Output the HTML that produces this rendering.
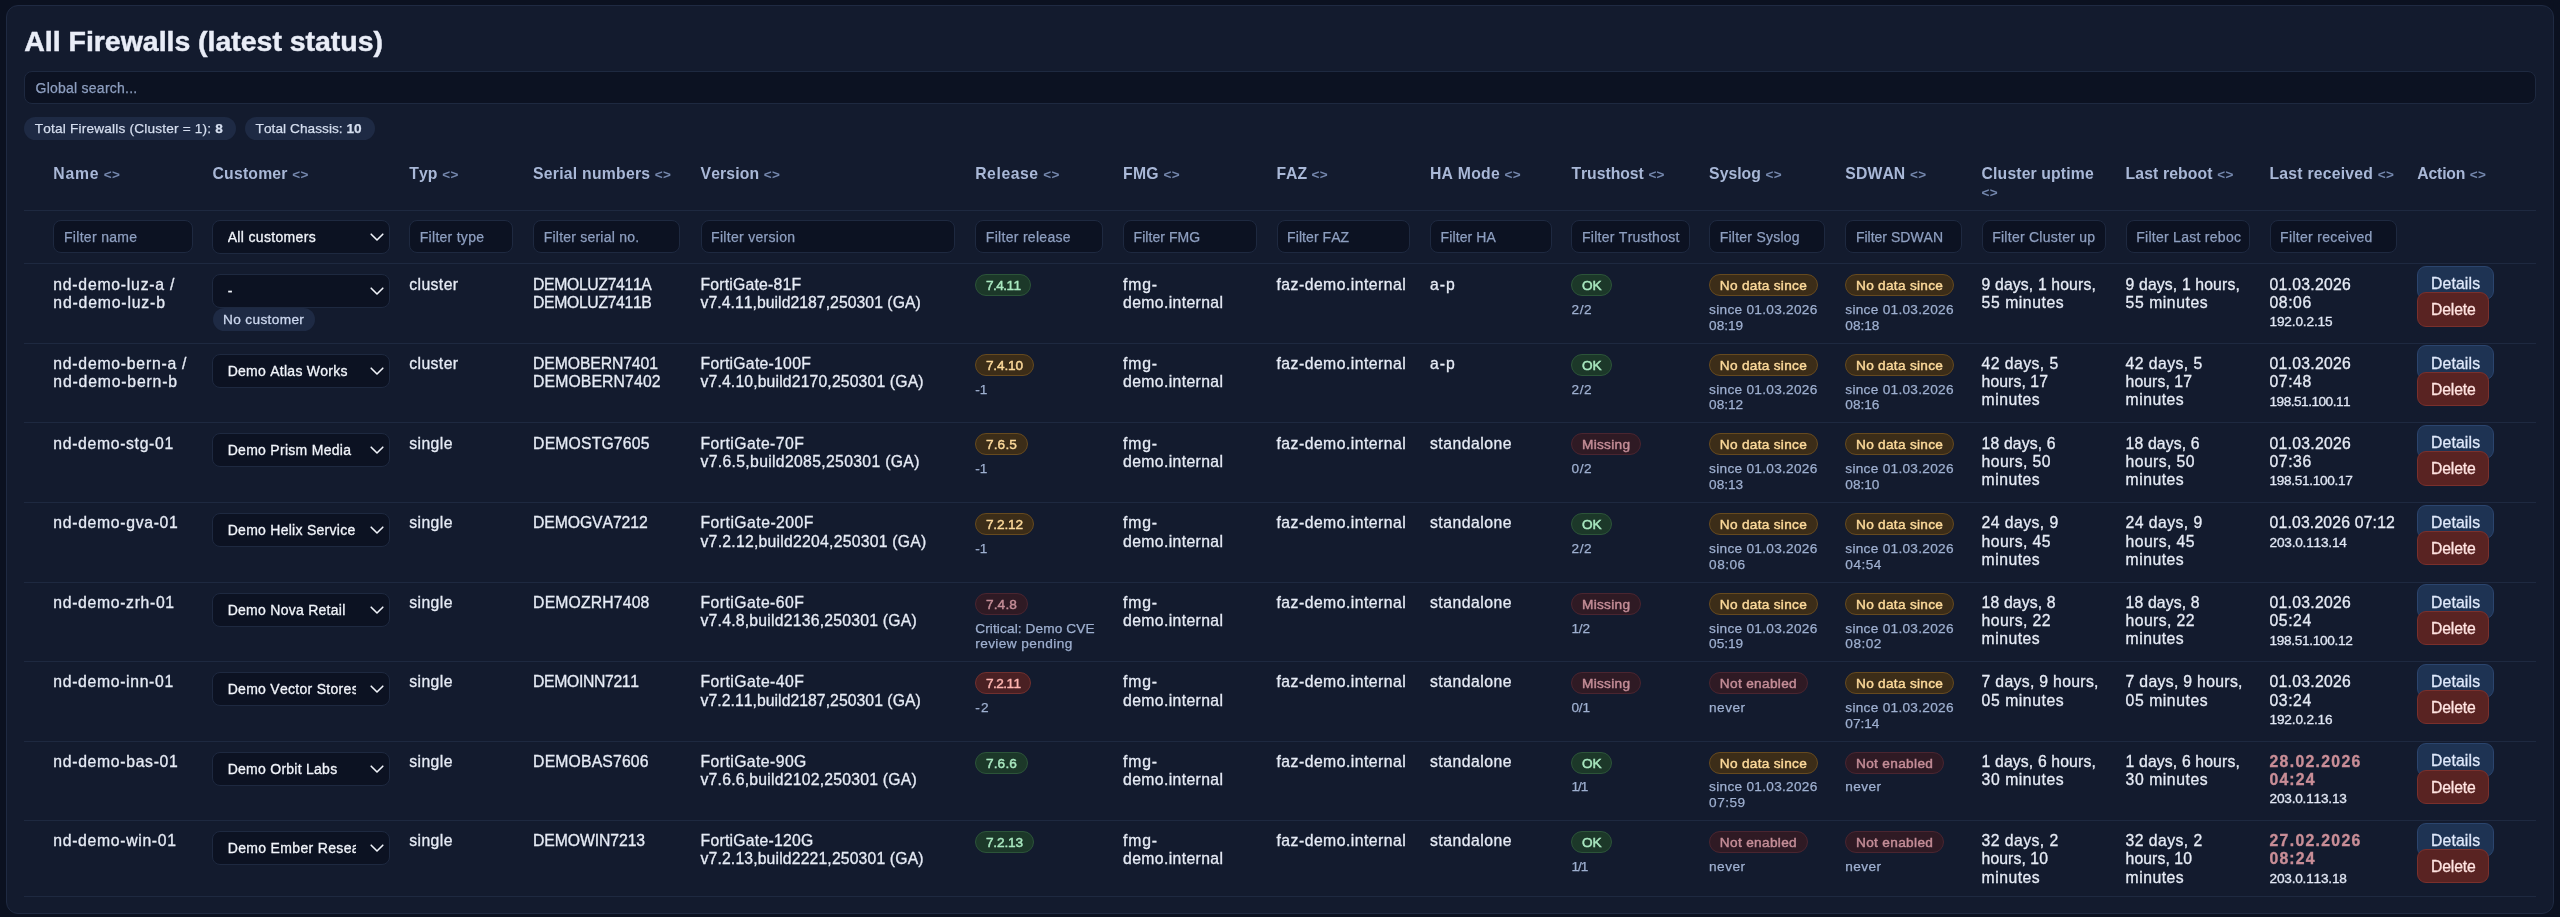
<!DOCTYPE html><html><head><meta charset="utf-8"><title>All Firewalls</title><style>
*{box-sizing:border-box}
html,body{margin:0;padding:0}
body{width:2560px;height:917px;overflow:hidden;background:#0b1120;font-family:"Liberation Sans",sans-serif;color:#e6ebf5;font-kerning:none;position:relative}
.abs,.card,.ln,.t,.s,.b,.inp,.sel,.pill,.btn,.h{position:absolute;white-space:nowrap}
.card{left:6px;top:5px;width:2548px;height:909px;border:1px solid #1f2a42;border-radius:12px;background:#131b2e}
.ln{left:24px;width:2512px;height:1px;background:#1e2940}
.t{line-height:18.2px;color:#e6ebf5;-webkit-text-stroke-width:0.3px}
.s{line-height:15.7px;color:#9fb0d0;-webkit-text-stroke-width:0.25px}
.h{line-height:18.2px;color:#a9b8d7}
.h i{font-style:normal;color:#7588ae}
.b{-webkit-text-stroke:0.45px;height:22px;border-radius:11px;border:1px solid;line-height:20px;padding:0 9.7px}
.g{background:#1c3829;border-color:#2c5439;color:#a9e8c0}
.a{background:#3c2d18;border-color:#664a1f;color:#fcd99a}
.r{background:#4a2023;border-color:#70302f;color:#fdb5b0}
.m{background:#2f1a24;border-color:#4a2530;color:#c48d97}
.inp{-webkit-text-stroke:0.25px;height:33px;border-radius:8px;border:1px solid #1e2940;background:#0c1222;color:#8e9fc0;line-height:31px;padding-left:9.6px;overflow:hidden}
.sel{-webkit-text-stroke:0.3px;height:34px;border-radius:8px;border:1px solid #1e2940;background:#0c1222;color:#f1f4fa;line-height:31.6px;padding-left:14.5px;overflow:hidden}
.sel svg{position:absolute;right:5px;top:10px}
.sel .tx{display:block;width:128px;overflow:hidden}
.pill{-webkit-text-stroke:0.25px;border-radius:12px;background:#1e2a44;color:#d5deef;padding:0 10.5px}
.btn{-webkit-text-stroke:0.3px;height:34.4px;border-radius:9px;border:1px solid;line-height:18px;padding:8.4px 12.7px 0}
.bd{background:#1e3353;border-color:#2b456e;color:#dfe9fb}
.br{background:#592322;border-color:#7a302c;color:#ffe3e0}
</style></head><body>
<div class="card"></div><div id="w" style="position:absolute;left:0;top:0;width:2560px;height:917px;will-change:transform">
<div class="t" style="left:24.3px;top:23.90px;line-height:34px;color:#e9edf7;-webkit-text-stroke:0.45px;"><span style="font-size:28.5px;letter-spacing:-0.029px;font-weight:700;">All Firewalls (latest status)</span></div>
<div class="inp" style="left:24px;top:71px;width:2512px;height:33px;line-height:31.5px;padding-left:10.5px"><span style="font-size:14.0px;letter-spacing:0.247px;">Global search...</span></div>
<div class="pill" style="left:24.3px;top:116.5px;width:211.5px;height:23.2px;line-height:22px"><span style="font-size:13.65px;letter-spacing:0.183px;">Total Firewalls (Cluster = 1): </span><span style="font-size:13.65px;letter-spacing:1.185px;font-weight:700;">8</span></div>
<div class="pill" style="left:245.1px;top:116.5px;width:130.2px;height:23.2px;line-height:22px"><span style="font-size:13.65px;letter-spacing:0.049px;">Total Chassis: </span><span style="font-size:13.65px;letter-spacing:-0.118px;font-weight:700;">10</span></div>
<div class="h" style="left:53.3px;top:165.00px"><span style="font-size:15.75px;letter-spacing:0.741px;font-weight:700;">Name</span><i style="margin-left:4.6px;font-size:13.5px;font-weight:700;letter-spacing:0.35px">&lt;&gt;</i></div>
<div class="h" style="left:212.5px;top:165.00px"><span style="font-size:15.75px;letter-spacing:0.208px;font-weight:700;">Customer</span><i style="margin-left:4.6px;font-size:13.5px;font-weight:700;letter-spacing:0.35px">&lt;&gt;</i></div>
<div class="h" style="left:409.2px;top:165.00px"><span style="font-size:15.75px;letter-spacing:0.143px;font-weight:700;">Typ</span><i style="margin-left:4.6px;font-size:13.5px;font-weight:700;letter-spacing:0.35px">&lt;&gt;</i></div>
<div class="h" style="left:533.1px;top:165.00px"><span style="font-size:15.75px;letter-spacing:0.240px;font-weight:700;">Serial numbers</span><i style="margin-left:4.6px;font-size:13.5px;font-weight:700;letter-spacing:0.35px">&lt;&gt;</i></div>
<div class="h" style="left:700.5px;top:165.00px"><span style="font-size:15.75px;letter-spacing:0.127px;font-weight:700;">Version</span><i style="margin-left:4.6px;font-size:13.5px;font-weight:700;letter-spacing:0.35px">&lt;&gt;</i></div>
<div class="h" style="left:975.2px;top:165.00px"><span style="font-size:15.75px;letter-spacing:0.561px;font-weight:700;">Release</span><i style="margin-left:4.6px;font-size:13.5px;font-weight:700;letter-spacing:0.35px">&lt;&gt;</i></div>
<div class="h" style="left:1123px;top:165.00px"><span style="font-size:15.75px;letter-spacing:0.287px;font-weight:700;">FMG</span><i style="margin-left:4.6px;font-size:13.5px;font-weight:700;letter-spacing:0.35px">&lt;&gt;</i></div>
<div class="h" style="left:1276.5px;top:165.00px"><span style="font-size:15.75px;letter-spacing:-0.046px;font-weight:700;">FAZ</span><i style="margin-left:4.6px;font-size:13.5px;font-weight:700;letter-spacing:0.35px">&lt;&gt;</i></div>
<div class="h" style="left:1430px;top:165.00px"><span style="font-size:15.75px;letter-spacing:0.243px;font-weight:700;">HA Mode</span><i style="margin-left:4.6px;font-size:13.5px;font-weight:700;letter-spacing:0.35px">&lt;&gt;</i></div>
<div class="h" style="left:1571.4px;top:165.00px"><span style="font-size:15.75px;letter-spacing:-0.024px;font-weight:700;">Trusthost</span><i style="margin-left:4.6px;font-size:13.5px;font-weight:700;letter-spacing:0.35px">&lt;&gt;</i></div>
<div class="h" style="left:1709.1px;top:165.00px"><span style="font-size:15.75px;letter-spacing:0.029px;font-weight:700;">Syslog</span><i style="margin-left:4.6px;font-size:13.5px;font-weight:700;letter-spacing:0.35px">&lt;&gt;</i></div>
<div class="h" style="left:1845.3px;top:165.00px"><span style="font-size:15.75px;letter-spacing:0.114px;font-weight:700;">SDWAN</span><i style="margin-left:4.6px;font-size:13.5px;font-weight:700;letter-spacing:0.35px">&lt;&gt;</i></div>
<div class="h" style="left:1981.6px;top:165.00px"><span style="font-size:15.75px;letter-spacing:0.137px;font-weight:700;">Cluster uptime</span><br><i style="margin-left:0px;font-size:13.5px;font-weight:700;letter-spacing:0.35px">&lt;&gt;</i></div>
<div class="h" style="left:2125.6px;top:165.00px"><span style="font-size:15.75px;letter-spacing:0.117px;font-weight:700;">Last reboot</span><i style="margin-left:4.6px;font-size:13.5px;font-weight:700;letter-spacing:0.35px">&lt;&gt;</i></div>
<div class="h" style="left:2269.5px;top:165.00px"><span style="font-size:15.75px;letter-spacing:0.228px;font-weight:700;">Last received</span><i style="margin-left:4.6px;font-size:13.5px;font-weight:700;letter-spacing:0.35px">&lt;&gt;</i></div>
<div class="h" style="left:2417.3px;top:165.00px"><span style="font-size:15.75px;letter-spacing:-0.182px;font-weight:700;">Action</span><i style="margin-left:4.6px;font-size:13.5px;font-weight:700;letter-spacing:0.35px">&lt;&gt;</i></div>
<div class="ln" style="top:209.5px"></div>
<div class="inp" style="left:53.3px;top:220px;width:139.3px"><span style="font-size:14.0px;letter-spacing:0.323px;">Filter name</span></div>
<div class="inp" style="left:409.2px;top:220px;width:103.8px"><span style="font-size:14.0px;letter-spacing:0.274px;">Filter type</span></div>
<div class="inp" style="left:533.1px;top:220px;width:147.4px"><span style="font-size:14.0px;letter-spacing:0.222px;">Filter serial no.</span></div>
<div class="inp" style="left:700.5px;top:220px;width:254.8px"><span style="font-size:14.0px;letter-spacing:0.299px;">Filter version</span></div>
<div class="inp" style="left:975.2px;top:220px;width:127.5px"><span style="font-size:14.0px;letter-spacing:0.303px;">Filter release</span></div>
<div class="inp" style="left:1123px;top:220px;width:133.5px"><span style="font-size:14.0px;letter-spacing:0.058px;">Filter FMG</span></div>
<div class="inp" style="left:1276.5px;top:220px;width:133.5px"><span style="font-size:14.0px;letter-spacing:0.070px;">Filter FAZ</span></div>
<div class="inp" style="left:1430px;top:220px;width:121.7px"><span style="font-size:14.0px;letter-spacing:0.096px;">Filter HA</span></div>
<div class="inp" style="left:1571.4px;top:220px;width:118.2px"><span style="font-size:14.0px;letter-spacing:0.267px;">Filter Trusthost</span></div>
<div class="inp" style="left:1709.1px;top:220px;width:116.3px"><span style="font-size:14.0px;letter-spacing:0.244px;">Filter Syslog</span></div>
<div class="inp" style="left:1845.3px;top:220px;width:116.4px"><span style="font-size:14.0px;letter-spacing:0.006px;">Filter SDWAN</span></div>
<div class="inp" style="left:1981.6px;top:220px;width:124.1px"><span style="font-size:14.0px;letter-spacing:0.257px;">Filter Cluster up</span></div>
<div class="inp" style="left:2125.6px;top:220px;width:124.1px"><span style="font-size:14.0px;letter-spacing:0.274px;">Filter Last reboc</span></div>
<div class="inp" style="left:2269.5px;top:220px;width:127.9px"><span style="font-size:14.0px;letter-spacing:0.312px;">Filter received</span></div>
<div class="sel" style="left:212.2px;top:220.2px;width:177.6px"><span class="tx"><span style="font-size:14.0px;letter-spacing:0.336px;">All customers</span></span><svg width="14" height="12" viewBox="0 0 14 12"><path d="M1.2 3.2 L7 9 L12.8 3.2" fill="none" stroke="#f1f4fa" stroke-width="1.6" stroke-linecap="round" stroke-linejoin="round"/></svg></div>
<div class="ln" style="top:263px"></div>
<div class="ln" style="top:343px"></div>
<div class="ln" style="top:422px"></div>
<div class="ln" style="top:502px"></div>
<div class="ln" style="top:582px"></div>
<div class="ln" style="top:661px"></div>
<div class="ln" style="top:741px"></div>
<div class="ln" style="top:820px"></div>
<div class="ln" style="top:896px"></div>
<div class="t" style="left:53.3px;top:275.60px;line-height:18.2px;"><span style="font-size:15.75px;letter-spacing:0.769px;">nd-demo-luz-a /</span></div>
<div class="t" style="left:53.3px;top:293.75px;line-height:18.2px;"><span style="font-size:15.75px;letter-spacing:0.839px;">nd-demo-luz-b</span></div>
<div class="sel" style="left:212.2px;top:274.3px;width:177.6px"><span class="tx"><span style="font-size:14.0px;letter-spacing:1.620px;">-</span></span><svg width="14" height="12" viewBox="0 0 14 12"><path d="M1.2 3.2 L7 9 L12.8 3.2" fill="none" stroke="#f1f4fa" stroke-width="1.6" stroke-linecap="round" stroke-linejoin="round"/></svg></div>
<div class="pill" style="left:212.5px;top:308.1px;height:23px;line-height:22.6px;width:102.5px;color:#ccd7ee;-webkit-text-stroke:0.3px"><span style="font-size:13.65px;letter-spacing:0.357px;">No customer</span></div>
<div class="t" style="left:409.2px;top:275.60px;line-height:18.2px;"><span style="font-size:15.75px;letter-spacing:0.419px;">cluster</span></div>
<div class="t" style="left:533.1px;top:275.60px;line-height:18.2px;"><span style="font-size:15.75px;letter-spacing:-0.346px;">DEMOLUZ7411A</span></div>
<div class="t" style="left:533.1px;top:293.75px;line-height:18.2px;"><span style="font-size:15.75px;letter-spacing:-0.346px;">DEMOLUZ7411B</span></div>
<div class="t" style="left:700.5px;top:275.60px;line-height:18.2px;"><span style="font-size:15.75px;letter-spacing:0.217px;">FortiGate-81F</span></div>
<div class="t" style="left:700.5px;top:293.75px;line-height:18.2px;"><span style="font-size:15.75px;letter-spacing:0.048px;">v7.4.11,build2187,250301 (GA)</span></div>
<div class="b g" style="left:975.2px;top:274.3px"><span style="font-size:13.65px;letter-spacing:-0.547px;">7.4.11</span></div>
<div class="t" style="left:1123px;top:275.60px;line-height:18.2px;"><span style="font-size:15.75px;letter-spacing:0.871px;">fmg-</span></div>
<div class="t" style="left:1123px;top:293.75px;line-height:18.2px;"><span style="font-size:15.75px;letter-spacing:0.376px;">demo.internal</span></div>
<div class="t" style="left:1276.5px;top:275.60px;line-height:18.2px;"><span style="font-size:15.75px;letter-spacing:0.473px;">faz-demo.internal</span></div>
<div class="t" style="left:1430px;top:275.60px;line-height:18.2px;"><span style="font-size:15.75px;letter-spacing:0.978px;">a-p</span></div>
<div class="b g" style="left:1571.4px;top:274.3px"><span style="font-size:13.65px;letter-spacing:-0.239px;">OK</span></div>
<div class="s" style="left:1571.4px;top:301.20px;line-height:15.7px;"><span style="font-size:13.65px;letter-spacing:0.678px;">2/2</span></div>
<div class="b a" style="left:1709.1px;top:274.3px"><span style="font-size:13.65px;letter-spacing:0.295px;">No data since</span></div>
<div class="s" style="left:1709.1px;top:301.20px;line-height:15.7px;"><span style="font-size:13.65px;letter-spacing:0.287px;">since 01.03.2026</span></div>
<div class="s" style="left:1709.1px;top:316.90px;line-height:15.7px;"><span style="font-size:13.65px;letter-spacing:-0.005px;">08:19</span></div>
<div class="b a" style="left:1845.3px;top:274.3px"><span style="font-size:13.65px;letter-spacing:0.295px;">No data since</span></div>
<div class="s" style="left:1845.3px;top:301.20px;line-height:15.7px;"><span style="font-size:13.65px;letter-spacing:0.287px;">since 01.03.2026</span></div>
<div class="s" style="left:1845.3px;top:316.90px;line-height:15.7px;"><span style="font-size:13.65px;letter-spacing:-0.005px;">08:18</span></div>
<div class="t" style="left:1981.6px;top:275.60px;line-height:18.2px;"><span style="font-size:15.75px;letter-spacing:0.142px;">9 days, 1 hours,</span></div>
<div class="t" style="left:1981.6px;top:293.75px;line-height:18.2px;"><span style="font-size:15.75px;letter-spacing:0.550px;">55 minutes</span></div>
<div class="t" style="left:2125.6px;top:275.60px;line-height:18.2px;"><span style="font-size:15.75px;letter-spacing:0.142px;">9 days, 1 hours,</span></div>
<div class="t" style="left:2125.6px;top:293.75px;line-height:18.2px;"><span style="font-size:15.75px;letter-spacing:0.550px;">55 minutes</span></div>
<div class="t" style="left:2269.5px;top:275.60px;line-height:18.2px;"><span style="font-size:15.75px;letter-spacing:0.282px;">01.03.2026</span></div>
<div class="t" style="left:2269.5px;top:293.75px;line-height:18.2px;"><span style="font-size:15.75px;letter-spacing:0.570px;">08:06</span></div>
<div class="t" style="left:2269.5px;top:313.25px;line-height:15.7px;color:#e1e7f4;"><span style="font-size:13.65px;letter-spacing:-0.162px;">192.0.2.15</span></div>
<div class="btn bd" style="left:2417.3px;top:265.9px"><span style="font-size:15.75px;letter-spacing:0.151px;">Details</span></div>
<div class="btn br" style="left:2417.3px;top:292.3px;padding-top:8px"><span style="font-size:15.75px;letter-spacing:-0.155px;">Delete</span></div>
<div class="t" style="left:53.3px;top:355.10px;line-height:18.2px;"><span style="font-size:15.75px;letter-spacing:0.766px;">nd-demo-bern-a /</span></div>
<div class="t" style="left:53.3px;top:373.25px;line-height:18.2px;"><span style="font-size:15.75px;letter-spacing:0.830px;">nd-demo-bern-b</span></div>
<div class="sel" style="left:212.2px;top:353.8px;width:177.6px"><span class="tx"><span style="font-size:14.0px;letter-spacing:0.264px;">Demo Atlas Works</span></span><svg width="14" height="12" viewBox="0 0 14 12"><path d="M1.2 3.2 L7 9 L12.8 3.2" fill="none" stroke="#f1f4fa" stroke-width="1.6" stroke-linecap="round" stroke-linejoin="round"/></svg></div>
<div class="t" style="left:409.2px;top:355.10px;line-height:18.2px;"><span style="font-size:15.75px;letter-spacing:0.419px;">cluster</span></div>
<div class="t" style="left:533.1px;top:355.10px;line-height:18.2px;"><span style="font-size:15.75px;letter-spacing:-0.113px;">DEMOBERN7401</span></div>
<div class="t" style="left:533.1px;top:373.25px;line-height:18.2px;"><span style="font-size:15.75px;letter-spacing:0.127px;">DEMOBERN7402</span></div>
<div class="t" style="left:700.5px;top:355.10px;line-height:18.2px;"><span style="font-size:15.75px;letter-spacing:0.268px;">FortiGate-100F</span></div>
<div class="t" style="left:700.5px;top:373.25px;line-height:18.2px;"><span style="font-size:15.75px;letter-spacing:0.147px;">v7.4.10,build2170,250301 (GA)</span></div>
<div class="b a" style="left:975.2px;top:353.8px"><span style="font-size:13.65px;letter-spacing:-0.131px;">7.4.10</span></div>
<div class="s" style="left:975.2px;top:380.70px;line-height:15.7px;"><span style="font-size:13.65px;letter-spacing:-0.053px;">-1</span></div>
<div class="t" style="left:1123px;top:355.10px;line-height:18.2px;"><span style="font-size:15.75px;letter-spacing:0.871px;">fmg-</span></div>
<div class="t" style="left:1123px;top:373.25px;line-height:18.2px;"><span style="font-size:15.75px;letter-spacing:0.376px;">demo.internal</span></div>
<div class="t" style="left:1276.5px;top:355.10px;line-height:18.2px;"><span style="font-size:15.75px;letter-spacing:0.473px;">faz-demo.internal</span></div>
<div class="t" style="left:1430px;top:355.10px;line-height:18.2px;"><span style="font-size:15.75px;letter-spacing:0.978px;">a-p</span></div>
<div class="b g" style="left:1571.4px;top:353.8px"><span style="font-size:13.65px;letter-spacing:-0.239px;">OK</span></div>
<div class="s" style="left:1571.4px;top:380.70px;line-height:15.7px;"><span style="font-size:13.65px;letter-spacing:0.678px;">2/2</span></div>
<div class="b a" style="left:1709.1px;top:353.8px"><span style="font-size:13.65px;letter-spacing:0.295px;">No data since</span></div>
<div class="s" style="left:1709.1px;top:380.70px;line-height:15.7px;"><span style="font-size:13.65px;letter-spacing:0.287px;">since 01.03.2026</span></div>
<div class="s" style="left:1709.1px;top:396.40px;line-height:15.7px;"><span style="font-size:13.65px;letter-spacing:-0.005px;">08:12</span></div>
<div class="b a" style="left:1845.3px;top:353.8px"><span style="font-size:13.65px;letter-spacing:0.295px;">No data since</span></div>
<div class="s" style="left:1845.3px;top:380.70px;line-height:15.7px;"><span style="font-size:13.65px;letter-spacing:0.287px;">since 01.03.2026</span></div>
<div class="s" style="left:1845.3px;top:396.40px;line-height:15.7px;"><span style="font-size:13.65px;letter-spacing:-0.005px;">08:16</span></div>
<div class="t" style="left:1981.6px;top:355.10px;line-height:18.2px;"><span style="font-size:15.75px;letter-spacing:0.432px;">42 days, 5</span></div>
<div class="t" style="left:1981.6px;top:373.25px;line-height:18.2px;"><span style="font-size:15.75px;letter-spacing:0.083px;">hours, 17</span></div>
<div class="t" style="left:1981.6px;top:391.40px;line-height:18.2px;"><span style="font-size:15.75px;letter-spacing:0.499px;">minutes</span></div>
<div class="t" style="left:2125.6px;top:355.10px;line-height:18.2px;"><span style="font-size:15.75px;letter-spacing:0.432px;">42 days, 5</span></div>
<div class="t" style="left:2125.6px;top:373.25px;line-height:18.2px;"><span style="font-size:15.75px;letter-spacing:0.083px;">hours, 17</span></div>
<div class="t" style="left:2125.6px;top:391.40px;line-height:18.2px;"><span style="font-size:15.75px;letter-spacing:0.499px;">minutes</span></div>
<div class="t" style="left:2269.5px;top:355.10px;line-height:18.2px;"><span style="font-size:15.75px;letter-spacing:0.282px;">01.03.2026</span></div>
<div class="t" style="left:2269.5px;top:373.25px;line-height:18.2px;"><span style="font-size:15.75px;letter-spacing:0.570px;">07:48</span></div>
<div class="t" style="left:2269.5px;top:392.75px;line-height:15.7px;color:#e1e7f4;"><span style="font-size:13.65px;letter-spacing:-0.514px;">198.51.100.11</span></div>
<div class="btn bd" style="left:2417.3px;top:345.4px"><span style="font-size:15.75px;letter-spacing:0.151px;">Details</span></div>
<div class="btn br" style="left:2417.3px;top:371.8px;padding-top:8px"><span style="font-size:15.75px;letter-spacing:-0.155px;">Delete</span></div>
<div class="t" style="left:53.3px;top:434.60px;line-height:18.2px;"><span style="font-size:15.75px;letter-spacing:0.671px;">nd-demo-stg-01</span></div>
<div class="sel" style="left:212.2px;top:433.3px;width:177.6px"><span class="tx"><span style="font-size:14.0px;letter-spacing:0.284px;">Demo Prism Media</span></span><svg width="14" height="12" viewBox="0 0 14 12"><path d="M1.2 3.2 L7 9 L12.8 3.2" fill="none" stroke="#f1f4fa" stroke-width="1.6" stroke-linecap="round" stroke-linejoin="round"/></svg></div>
<div class="t" style="left:409.2px;top:434.60px;line-height:18.2px;"><span style="font-size:15.75px;letter-spacing:0.434px;">single</span></div>
<div class="t" style="left:533.1px;top:434.60px;line-height:18.2px;"><span style="font-size:15.75px;letter-spacing:0.163px;">DEMOSTG7605</span></div>
<div class="t" style="left:700.5px;top:434.60px;line-height:18.2px;"><span style="font-size:15.75px;letter-spacing:0.438px;">FortiGate-70F</span></div>
<div class="t" style="left:700.5px;top:452.75px;line-height:18.2px;"><span style="font-size:15.75px;letter-spacing:0.324px;">v7.6.5,build2085,250301 (GA)</span></div>
<div class="b a" style="left:975.2px;top:433.3px"><span style="font-size:13.65px;letter-spacing:0.180px;">7.6.5</span></div>
<div class="s" style="left:975.2px;top:460.20px;line-height:15.7px;"><span style="font-size:13.65px;letter-spacing:-0.053px;">-1</span></div>
<div class="t" style="left:1123px;top:434.60px;line-height:18.2px;"><span style="font-size:15.75px;letter-spacing:0.871px;">fmg-</span></div>
<div class="t" style="left:1123px;top:452.75px;line-height:18.2px;"><span style="font-size:15.75px;letter-spacing:0.376px;">demo.internal</span></div>
<div class="t" style="left:1276.5px;top:434.60px;line-height:18.2px;"><span style="font-size:15.75px;letter-spacing:0.473px;">faz-demo.internal</span></div>
<div class="t" style="left:1430px;top:434.60px;line-height:18.2px;"><span style="font-size:15.75px;letter-spacing:0.488px;">standalone</span></div>
<div class="b m" style="left:1571.4px;top:433.3px"><span style="font-size:13.65px;letter-spacing:0.276px;">Missing</span></div>
<div class="s" style="left:1571.4px;top:460.20px;line-height:15.7px;"><span style="font-size:13.65px;letter-spacing:0.678px;">0/2</span></div>
<div class="b a" style="left:1709.1px;top:433.3px"><span style="font-size:13.65px;letter-spacing:0.295px;">No data since</span></div>
<div class="s" style="left:1709.1px;top:460.20px;line-height:15.7px;"><span style="font-size:13.65px;letter-spacing:0.287px;">since 01.03.2026</span></div>
<div class="s" style="left:1709.1px;top:475.90px;line-height:15.7px;"><span style="font-size:13.65px;letter-spacing:-0.005px;">08:13</span></div>
<div class="b a" style="left:1845.3px;top:433.3px"><span style="font-size:13.65px;letter-spacing:0.295px;">No data since</span></div>
<div class="s" style="left:1845.3px;top:460.20px;line-height:15.7px;"><span style="font-size:13.65px;letter-spacing:0.287px;">since 01.03.2026</span></div>
<div class="s" style="left:1845.3px;top:475.90px;line-height:15.7px;"><span style="font-size:13.65px;letter-spacing:-0.005px;">08:10</span></div>
<div class="t" style="left:1981.6px;top:434.60px;line-height:18.2px;"><span style="font-size:15.75px;letter-spacing:0.144px;">18 days, 6</span></div>
<div class="t" style="left:1981.6px;top:452.75px;line-height:18.2px;"><span style="font-size:15.75px;letter-spacing:0.403px;">hours, 50</span></div>
<div class="t" style="left:1981.6px;top:470.90px;line-height:18.2px;"><span style="font-size:15.75px;letter-spacing:0.499px;">minutes</span></div>
<div class="t" style="left:2125.6px;top:434.60px;line-height:18.2px;"><span style="font-size:15.75px;letter-spacing:0.144px;">18 days, 6</span></div>
<div class="t" style="left:2125.6px;top:452.75px;line-height:18.2px;"><span style="font-size:15.75px;letter-spacing:0.403px;">hours, 50</span></div>
<div class="t" style="left:2125.6px;top:470.90px;line-height:18.2px;"><span style="font-size:15.75px;letter-spacing:0.499px;">minutes</span></div>
<div class="t" style="left:2269.5px;top:434.60px;line-height:18.2px;"><span style="font-size:15.75px;letter-spacing:0.282px;">01.03.2026</span></div>
<div class="t" style="left:2269.5px;top:452.75px;line-height:18.2px;"><span style="font-size:15.75px;letter-spacing:0.570px;">07:36</span></div>
<div class="t" style="left:2269.5px;top:472.25px;line-height:15.7px;color:#e1e7f4;"><span style="font-size:13.65px;letter-spacing:-0.322px;">198.51.100.17</span></div>
<div class="btn bd" style="left:2417.3px;top:424.9px"><span style="font-size:15.75px;letter-spacing:0.151px;">Details</span></div>
<div class="btn br" style="left:2417.3px;top:451.3px;padding-top:8px"><span style="font-size:15.75px;letter-spacing:-0.155px;">Delete</span></div>
<div class="t" style="left:53.3px;top:514.40px;line-height:18.2px;"><span style="font-size:15.75px;letter-spacing:0.690px;">nd-demo-gva-01</span></div>
<div class="sel" style="left:212.2px;top:513.1px;width:177.6px"><span class="tx"><span style="font-size:14.0px;letter-spacing:0.274px;">Demo Helix Service</span></span><svg width="14" height="12" viewBox="0 0 14 12"><path d="M1.2 3.2 L7 9 L12.8 3.2" fill="none" stroke="#f1f4fa" stroke-width="1.6" stroke-linecap="round" stroke-linejoin="round"/></svg></div>
<div class="t" style="left:409.2px;top:514.40px;line-height:18.2px;"><span style="font-size:15.75px;letter-spacing:0.434px;">single</span></div>
<div class="t" style="left:533.1px;top:514.40px;line-height:18.2px;"><span style="font-size:15.75px;letter-spacing:-0.100px;">DEMOGVA7212</span></div>
<div class="t" style="left:700.5px;top:514.40px;line-height:18.2px;"><span style="font-size:15.75px;letter-spacing:0.473px;">FortiGate-200F</span></div>
<div class="t" style="left:700.5px;top:532.55px;line-height:18.2px;"><span style="font-size:15.75px;letter-spacing:0.246px;">v7.2.12,build2204,250301 (GA)</span></div>
<div class="b a" style="left:975.2px;top:513.1px"><span style="font-size:13.65px;letter-spacing:-0.131px;">7.2.12</span></div>
<div class="s" style="left:975.2px;top:540.00px;line-height:15.7px;"><span style="font-size:13.65px;letter-spacing:-0.053px;">-1</span></div>
<div class="t" style="left:1123px;top:514.40px;line-height:18.2px;"><span style="font-size:15.75px;letter-spacing:0.871px;">fmg-</span></div>
<div class="t" style="left:1123px;top:532.55px;line-height:18.2px;"><span style="font-size:15.75px;letter-spacing:0.376px;">demo.internal</span></div>
<div class="t" style="left:1276.5px;top:514.40px;line-height:18.2px;"><span style="font-size:15.75px;letter-spacing:0.473px;">faz-demo.internal</span></div>
<div class="t" style="left:1430px;top:514.40px;line-height:18.2px;"><span style="font-size:15.75px;letter-spacing:0.488px;">standalone</span></div>
<div class="b g" style="left:1571.4px;top:513.1px"><span style="font-size:13.65px;letter-spacing:-0.239px;">OK</span></div>
<div class="s" style="left:1571.4px;top:540.00px;line-height:15.7px;"><span style="font-size:13.65px;letter-spacing:0.678px;">2/2</span></div>
<div class="b a" style="left:1709.1px;top:513.1px"><span style="font-size:13.65px;letter-spacing:0.295px;">No data since</span></div>
<div class="s" style="left:1709.1px;top:540.00px;line-height:15.7px;"><span style="font-size:13.65px;letter-spacing:0.287px;">since 01.03.2026</span></div>
<div class="s" style="left:1709.1px;top:555.70px;line-height:15.7px;"><span style="font-size:13.65px;letter-spacing:0.494px;">08:06</span></div>
<div class="b a" style="left:1845.3px;top:513.1px"><span style="font-size:13.65px;letter-spacing:0.295px;">No data since</span></div>
<div class="s" style="left:1845.3px;top:540.00px;line-height:15.7px;"><span style="font-size:13.65px;letter-spacing:0.287px;">since 01.03.2026</span></div>
<div class="s" style="left:1845.3px;top:555.70px;line-height:15.7px;"><span style="font-size:13.65px;letter-spacing:0.494px;">04:54</span></div>
<div class="t" style="left:1981.6px;top:514.40px;line-height:18.2px;"><span style="font-size:15.75px;letter-spacing:0.432px;">24 days, 9</span></div>
<div class="t" style="left:1981.6px;top:532.55px;line-height:18.2px;"><span style="font-size:15.75px;letter-spacing:0.403px;">hours, 45</span></div>
<div class="t" style="left:1981.6px;top:550.70px;line-height:18.2px;"><span style="font-size:15.75px;letter-spacing:0.499px;">minutes</span></div>
<div class="t" style="left:2125.6px;top:514.40px;line-height:18.2px;"><span style="font-size:15.75px;letter-spacing:0.432px;">24 days, 9</span></div>
<div class="t" style="left:2125.6px;top:532.55px;line-height:18.2px;"><span style="font-size:15.75px;letter-spacing:0.403px;">hours, 45</span></div>
<div class="t" style="left:2125.6px;top:550.70px;line-height:18.2px;"><span style="font-size:15.75px;letter-spacing:0.499px;">minutes</span></div>
<div class="t" style="left:2269.5px;top:514.40px;line-height:18.2px;"><span style="font-size:15.75px;letter-spacing:0.183px;">01.03.2026 07:12</span></div>
<div class="t" style="left:2269.5px;top:533.90px;line-height:15.7px;color:#e1e7f4;"><span style="font-size:13.65px;letter-spacing:-0.208px;">203.0.113.14</span></div>
<div class="btn bd" style="left:2417.3px;top:504.7px"><span style="font-size:15.75px;letter-spacing:0.151px;">Details</span></div>
<div class="btn br" style="left:2417.3px;top:531.1px;padding-top:8px"><span style="font-size:15.75px;letter-spacing:-0.155px;">Delete</span></div>
<div class="t" style="left:53.3px;top:594.00px;line-height:18.2px;"><span style="font-size:15.75px;letter-spacing:0.675px;">nd-demo-zrh-01</span></div>
<div class="sel" style="left:212.2px;top:592.7px;width:177.6px"><span class="tx"><span style="font-size:14.0px;letter-spacing:0.267px;">Demo Nova Retail</span></span><svg width="14" height="12" viewBox="0 0 14 12"><path d="M1.2 3.2 L7 9 L12.8 3.2" fill="none" stroke="#f1f4fa" stroke-width="1.6" stroke-linecap="round" stroke-linejoin="round"/></svg></div>
<div class="t" style="left:409.2px;top:594.00px;line-height:18.2px;"><span style="font-size:15.75px;letter-spacing:0.434px;">single</span></div>
<div class="t" style="left:533.1px;top:594.00px;line-height:18.2px;"><span style="font-size:15.75px;letter-spacing:0.163px;">DEMOZRH7408</span></div>
<div class="t" style="left:700.5px;top:594.00px;line-height:18.2px;"><span style="font-size:15.75px;letter-spacing:0.438px;">FortiGate-60F</span></div>
<div class="t" style="left:700.5px;top:612.15px;line-height:18.2px;"><span style="font-size:15.75px;letter-spacing:0.222px;">v7.4.8,build2136,250301 (GA)</span></div>
<div class="b m" style="left:975.2px;top:592.7px"><span style="font-size:13.65px;letter-spacing:0.180px;">7.4.8</span></div>
<div class="s" style="left:975.2px;top:619.60px;line-height:15.7px;"><span style="font-size:13.65px;letter-spacing:0.113px;">Critical: Demo CVE</span></div>
<div class="s" style="left:975.2px;top:635.30px;line-height:15.7px;"><span style="font-size:13.65px;letter-spacing:0.407px;">review pending</span></div>
<div class="t" style="left:1123px;top:594.00px;line-height:18.2px;"><span style="font-size:15.75px;letter-spacing:0.871px;">fmg-</span></div>
<div class="t" style="left:1123px;top:612.15px;line-height:18.2px;"><span style="font-size:15.75px;letter-spacing:0.376px;">demo.internal</span></div>
<div class="t" style="left:1276.5px;top:594.00px;line-height:18.2px;"><span style="font-size:15.75px;letter-spacing:0.473px;">faz-demo.internal</span></div>
<div class="t" style="left:1430px;top:594.00px;line-height:18.2px;"><span style="font-size:15.75px;letter-spacing:0.488px;">standalone</span></div>
<div class="b m" style="left:1571.4px;top:592.7px"><span style="font-size:13.65px;letter-spacing:0.276px;">Missing</span></div>
<div class="s" style="left:1571.4px;top:619.60px;line-height:15.7px;"><span style="font-size:13.65px;letter-spacing:-0.153px;">1/2</span></div>
<div class="b a" style="left:1709.1px;top:592.7px"><span style="font-size:13.65px;letter-spacing:0.295px;">No data since</span></div>
<div class="s" style="left:1709.1px;top:619.60px;line-height:15.7px;"><span style="font-size:13.65px;letter-spacing:0.287px;">since 01.03.2026</span></div>
<div class="s" style="left:1709.1px;top:635.30px;line-height:15.7px;"><span style="font-size:13.65px;letter-spacing:-0.005px;">05:19</span></div>
<div class="b a" style="left:1845.3px;top:592.7px"><span style="font-size:13.65px;letter-spacing:0.295px;">No data since</span></div>
<div class="s" style="left:1845.3px;top:619.60px;line-height:15.7px;"><span style="font-size:13.65px;letter-spacing:0.287px;">since 01.03.2026</span></div>
<div class="s" style="left:1845.3px;top:635.30px;line-height:15.7px;"><span style="font-size:13.65px;letter-spacing:0.494px;">08:02</span></div>
<div class="t" style="left:1981.6px;top:594.00px;line-height:18.2px;"><span style="font-size:15.75px;letter-spacing:0.144px;">18 days, 8</span></div>
<div class="t" style="left:1981.6px;top:612.15px;line-height:18.2px;"><span style="font-size:15.75px;letter-spacing:0.403px;">hours, 22</span></div>
<div class="t" style="left:1981.6px;top:630.30px;line-height:18.2px;"><span style="font-size:15.75px;letter-spacing:0.499px;">minutes</span></div>
<div class="t" style="left:2125.6px;top:594.00px;line-height:18.2px;"><span style="font-size:15.75px;letter-spacing:0.144px;">18 days, 8</span></div>
<div class="t" style="left:2125.6px;top:612.15px;line-height:18.2px;"><span style="font-size:15.75px;letter-spacing:0.403px;">hours, 22</span></div>
<div class="t" style="left:2125.6px;top:630.30px;line-height:18.2px;"><span style="font-size:15.75px;letter-spacing:0.499px;">minutes</span></div>
<div class="t" style="left:2269.5px;top:594.00px;line-height:18.2px;"><span style="font-size:15.75px;letter-spacing:0.282px;">01.03.2026</span></div>
<div class="t" style="left:2269.5px;top:612.15px;line-height:18.2px;"><span style="font-size:15.75px;letter-spacing:0.570px;">05:24</span></div>
<div class="t" style="left:2269.5px;top:631.65px;line-height:15.7px;color:#e1e7f4;"><span style="font-size:13.65px;letter-spacing:-0.322px;">198.51.100.12</span></div>
<div class="btn bd" style="left:2417.3px;top:584.3px"><span style="font-size:15.75px;letter-spacing:0.151px;">Details</span></div>
<div class="btn br" style="left:2417.3px;top:610.7px;padding-top:8px"><span style="font-size:15.75px;letter-spacing:-0.155px;">Delete</span></div>
<div class="t" style="left:53.3px;top:673.40px;line-height:18.2px;"><span style="font-size:15.75px;letter-spacing:0.671px;">nd-demo-inn-01</span></div>
<div class="sel" style="left:212.2px;top:672.1px;width:177.6px"><span class="tx"><span style="font-size:14.0px;letter-spacing:0.289px;">Demo Vector Stores</span></span><svg width="14" height="12" viewBox="0 0 14 12"><path d="M1.2 3.2 L7 9 L12.8 3.2" fill="none" stroke="#f1f4fa" stroke-width="1.6" stroke-linecap="round" stroke-linejoin="round"/></svg></div>
<div class="t" style="left:409.2px;top:673.40px;line-height:18.2px;"><span style="font-size:15.75px;letter-spacing:0.434px;">single</span></div>
<div class="t" style="left:533.1px;top:673.40px;line-height:18.2px;"><span style="font-size:15.75px;letter-spacing:-0.348px;">DEMOINN7211</span></div>
<div class="t" style="left:700.5px;top:673.40px;line-height:18.2px;"><span style="font-size:15.75px;letter-spacing:0.438px;">FortiGate-40F</span></div>
<div class="t" style="left:700.5px;top:691.55px;line-height:18.2px;"><span style="font-size:15.75px;letter-spacing:0.048px;">v7.2.11,build2187,250301 (GA)</span></div>
<div class="b r" style="left:975.2px;top:672.1px"><span style="font-size:13.65px;letter-spacing:-0.547px;">7.2.11</span></div>
<div class="s" style="left:975.2px;top:699.00px;line-height:15.7px;"><span style="font-size:13.65px;letter-spacing:1.194px;">-2</span></div>
<div class="t" style="left:1123px;top:673.40px;line-height:18.2px;"><span style="font-size:15.75px;letter-spacing:0.871px;">fmg-</span></div>
<div class="t" style="left:1123px;top:691.55px;line-height:18.2px;"><span style="font-size:15.75px;letter-spacing:0.376px;">demo.internal</span></div>
<div class="t" style="left:1276.5px;top:673.40px;line-height:18.2px;"><span style="font-size:15.75px;letter-spacing:0.473px;">faz-demo.internal</span></div>
<div class="t" style="left:1430px;top:673.40px;line-height:18.2px;"><span style="font-size:15.75px;letter-spacing:0.488px;">standalone</span></div>
<div class="b m" style="left:1571.4px;top:672.1px"><span style="font-size:13.65px;letter-spacing:0.276px;">Missing</span></div>
<div class="s" style="left:1571.4px;top:699.00px;line-height:15.7px;"><span style="font-size:13.65px;letter-spacing:-0.153px;">0/1</span></div>
<div class="b m" style="left:1709.1px;top:672.1px"><span style="font-size:13.65px;letter-spacing:0.335px;">Not enabled</span></div>
<div class="s" style="left:1709.1px;top:699.00px;line-height:15.7px;"><span style="font-size:13.65px;letter-spacing:0.432px;">never</span></div>
<div class="b a" style="left:1845.3px;top:672.1px"><span style="font-size:13.65px;letter-spacing:0.295px;">No data since</span></div>
<div class="s" style="left:1845.3px;top:699.00px;line-height:15.7px;"><span style="font-size:13.65px;letter-spacing:0.287px;">since 01.03.2026</span></div>
<div class="s" style="left:1845.3px;top:714.70px;line-height:15.7px;"><span style="font-size:13.65px;letter-spacing:-0.005px;">07:14</span></div>
<div class="t" style="left:1981.6px;top:673.40px;line-height:18.2px;"><span style="font-size:15.75px;letter-spacing:0.322px;">7 days, 9 hours,</span></div>
<div class="t" style="left:1981.6px;top:691.55px;line-height:18.2px;"><span style="font-size:15.75px;letter-spacing:0.550px;">05 minutes</span></div>
<div class="t" style="left:2125.6px;top:673.40px;line-height:18.2px;"><span style="font-size:15.75px;letter-spacing:0.322px;">7 days, 9 hours,</span></div>
<div class="t" style="left:2125.6px;top:691.55px;line-height:18.2px;"><span style="font-size:15.75px;letter-spacing:0.550px;">05 minutes</span></div>
<div class="t" style="left:2269.5px;top:673.40px;line-height:18.2px;"><span style="font-size:15.75px;letter-spacing:0.282px;">01.03.2026</span></div>
<div class="t" style="left:2269.5px;top:691.55px;line-height:18.2px;"><span style="font-size:15.75px;letter-spacing:0.570px;">03:24</span></div>
<div class="t" style="left:2269.5px;top:711.05px;line-height:15.7px;color:#e1e7f4;"><span style="font-size:13.65px;letter-spacing:-0.162px;">192.0.2.16</span></div>
<div class="btn bd" style="left:2417.3px;top:663.7px"><span style="font-size:15.75px;letter-spacing:0.151px;">Details</span></div>
<div class="btn br" style="left:2417.3px;top:690.1px;padding-top:8px"><span style="font-size:15.75px;letter-spacing:-0.155px;">Delete</span></div>
<div class="t" style="left:53.3px;top:752.80px;line-height:18.2px;"><span style="font-size:15.75px;letter-spacing:0.690px;">nd-demo-bas-01</span></div>
<div class="sel" style="left:212.2px;top:751.5px;width:177.6px"><span class="tx"><span style="font-size:14.0px;letter-spacing:0.261px;">Demo Orbit Labs</span></span><svg width="14" height="12" viewBox="0 0 14 12"><path d="M1.2 3.2 L7 9 L12.8 3.2" fill="none" stroke="#f1f4fa" stroke-width="1.6" stroke-linecap="round" stroke-linejoin="round"/></svg></div>
<div class="t" style="left:409.2px;top:752.80px;line-height:18.2px;"><span style="font-size:15.75px;letter-spacing:0.434px;">single</span></div>
<div class="t" style="left:533.1px;top:752.80px;line-height:18.2px;"><span style="font-size:15.75px;letter-spacing:0.165px;">DEMOBAS7606</span></div>
<div class="t" style="left:700.5px;top:752.80px;line-height:18.2px;"><span style="font-size:15.75px;letter-spacing:0.433px;">FortiGate-90G</span></div>
<div class="t" style="left:700.5px;top:770.95px;line-height:18.2px;"><span style="font-size:15.75px;letter-spacing:0.222px;">v7.6.6,build2102,250301 (GA)</span></div>
<div class="b g" style="left:975.2px;top:751.5px"><span style="font-size:13.65px;letter-spacing:0.180px;">7.6.6</span></div>
<div class="t" style="left:1123px;top:752.80px;line-height:18.2px;"><span style="font-size:15.75px;letter-spacing:0.871px;">fmg-</span></div>
<div class="t" style="left:1123px;top:770.95px;line-height:18.2px;"><span style="font-size:15.75px;letter-spacing:0.376px;">demo.internal</span></div>
<div class="t" style="left:1276.5px;top:752.80px;line-height:18.2px;"><span style="font-size:15.75px;letter-spacing:0.473px;">faz-demo.internal</span></div>
<div class="t" style="left:1430px;top:752.80px;line-height:18.2px;"><span style="font-size:15.75px;letter-spacing:0.488px;">standalone</span></div>
<div class="b g" style="left:1571.4px;top:751.5px"><span style="font-size:13.65px;letter-spacing:-0.239px;">OK</span></div>
<div class="s" style="left:1571.4px;top:778.40px;line-height:15.7px;"><span style="font-size:13.65px;letter-spacing:-0.985px;">1/1</span></div>
<div class="b a" style="left:1709.1px;top:751.5px"><span style="font-size:13.65px;letter-spacing:0.295px;">No data since</span></div>
<div class="s" style="left:1709.1px;top:778.40px;line-height:15.7px;"><span style="font-size:13.65px;letter-spacing:0.287px;">since 01.03.2026</span></div>
<div class="s" style="left:1709.1px;top:794.10px;line-height:15.7px;"><span style="font-size:13.65px;letter-spacing:0.494px;">07:59</span></div>
<div class="b m" style="left:1845.3px;top:751.5px"><span style="font-size:13.65px;letter-spacing:0.335px;">Not enabled</span></div>
<div class="s" style="left:1845.3px;top:778.40px;line-height:15.7px;"><span style="font-size:13.65px;letter-spacing:0.432px;">never</span></div>
<div class="t" style="left:1981.6px;top:752.80px;line-height:18.2px;"><span style="font-size:15.75px;letter-spacing:0.142px;">1 days, 6 hours,</span></div>
<div class="t" style="left:1981.6px;top:770.95px;line-height:18.2px;"><span style="font-size:15.75px;letter-spacing:0.550px;">30 minutes</span></div>
<div class="t" style="left:2125.6px;top:752.80px;line-height:18.2px;"><span style="font-size:15.75px;letter-spacing:0.142px;">1 days, 6 hours,</span></div>
<div class="t" style="left:2125.6px;top:770.95px;line-height:18.2px;"><span style="font-size:15.75px;letter-spacing:0.550px;">30 minutes</span></div>
<div class="t" style="left:2269.5px;top:752.80px;line-height:18.2px;color:#c98e97;-webkit-text-stroke-width:0.35px;"><span style="font-size:15.75px;letter-spacing:1.330px;font-weight:700;">28.02.2026</span></div>
<div class="t" style="left:2269.5px;top:770.95px;line-height:18.2px;color:#c98e97;-webkit-text-stroke-width:0.35px;"><span style="font-size:15.75px;letter-spacing:1.156px;font-weight:700;">04:24</span></div>
<div class="t" style="left:2269.5px;top:790.45px;line-height:15.7px;color:#e1e7f4;"><span style="font-size:13.65px;letter-spacing:-0.208px;">203.0.113.13</span></div>
<div class="btn bd" style="left:2417.3px;top:743.1px"><span style="font-size:15.75px;letter-spacing:0.151px;">Details</span></div>
<div class="btn br" style="left:2417.3px;top:769.5px;padding-top:8px"><span style="font-size:15.75px;letter-spacing:-0.155px;">Delete</span></div>
<div class="t" style="left:53.3px;top:832.20px;line-height:18.2px;"><span style="font-size:15.75px;letter-spacing:0.683px;">nd-demo-win-01</span></div>
<div class="sel" style="left:212.2px;top:830.9px;width:177.6px"><span class="tx"><span style="font-size:14.0px;letter-spacing:0.337px;">Demo Ember Research</span></span><svg width="14" height="12" viewBox="0 0 14 12"><path d="M1.2 3.2 L7 9 L12.8 3.2" fill="none" stroke="#f1f4fa" stroke-width="1.6" stroke-linecap="round" stroke-linejoin="round"/></svg></div>
<div class="t" style="left:409.2px;top:832.20px;line-height:18.2px;"><span style="font-size:15.75px;letter-spacing:0.434px;">single</span></div>
<div class="t" style="left:533.1px;top:832.20px;line-height:18.2px;"><span style="font-size:15.75px;letter-spacing:-0.094px;">DEMOWIN7213</span></div>
<div class="t" style="left:700.5px;top:832.20px;line-height:18.2px;"><span style="font-size:15.75px;letter-spacing:0.263px;">FortiGate-120G</span></div>
<div class="t" style="left:700.5px;top:850.35px;line-height:18.2px;"><span style="font-size:15.75px;letter-spacing:0.147px;">v7.2.13,build2221,250301 (GA)</span></div>
<div class="b g" style="left:975.2px;top:830.9px"><span style="font-size:13.65px;letter-spacing:-0.131px;">7.2.13</span></div>
<div class="t" style="left:1123px;top:832.20px;line-height:18.2px;"><span style="font-size:15.75px;letter-spacing:0.871px;">fmg-</span></div>
<div class="t" style="left:1123px;top:850.35px;line-height:18.2px;"><span style="font-size:15.75px;letter-spacing:0.376px;">demo.internal</span></div>
<div class="t" style="left:1276.5px;top:832.20px;line-height:18.2px;"><span style="font-size:15.75px;letter-spacing:0.473px;">faz-demo.internal</span></div>
<div class="t" style="left:1430px;top:832.20px;line-height:18.2px;"><span style="font-size:15.75px;letter-spacing:0.488px;">standalone</span></div>
<div class="b g" style="left:1571.4px;top:830.9px"><span style="font-size:13.65px;letter-spacing:-0.239px;">OK</span></div>
<div class="s" style="left:1571.4px;top:857.80px;line-height:15.7px;"><span style="font-size:13.65px;letter-spacing:-0.985px;">1/1</span></div>
<div class="b m" style="left:1709.1px;top:830.9px"><span style="font-size:13.65px;letter-spacing:0.335px;">Not enabled</span></div>
<div class="s" style="left:1709.1px;top:857.80px;line-height:15.7px;"><span style="font-size:13.65px;letter-spacing:0.432px;">never</span></div>
<div class="b m" style="left:1845.3px;top:830.9px"><span style="font-size:13.65px;letter-spacing:0.335px;">Not enabled</span></div>
<div class="s" style="left:1845.3px;top:857.80px;line-height:15.7px;"><span style="font-size:13.65px;letter-spacing:0.432px;">never</span></div>
<div class="t" style="left:1981.6px;top:832.20px;line-height:18.2px;"><span style="font-size:15.75px;letter-spacing:0.432px;">32 days, 2</span></div>
<div class="t" style="left:1981.6px;top:850.35px;line-height:18.2px;"><span style="font-size:15.75px;letter-spacing:0.083px;">hours, 10</span></div>
<div class="t" style="left:1981.6px;top:868.50px;line-height:18.2px;"><span style="font-size:15.75px;letter-spacing:0.499px;">minutes</span></div>
<div class="t" style="left:2125.6px;top:832.20px;line-height:18.2px;"><span style="font-size:15.75px;letter-spacing:0.432px;">32 days, 2</span></div>
<div class="t" style="left:2125.6px;top:850.35px;line-height:18.2px;"><span style="font-size:15.75px;letter-spacing:0.083px;">hours, 10</span></div>
<div class="t" style="left:2125.6px;top:868.50px;line-height:18.2px;"><span style="font-size:15.75px;letter-spacing:0.499px;">minutes</span></div>
<div class="t" style="left:2269.5px;top:832.20px;line-height:18.2px;color:#c98e97;-webkit-text-stroke-width:0.35px;"><span style="font-size:15.75px;letter-spacing:1.330px;font-weight:700;">27.02.2026</span></div>
<div class="t" style="left:2269.5px;top:850.35px;line-height:18.2px;color:#c98e97;-webkit-text-stroke-width:0.35px;"><span style="font-size:15.75px;letter-spacing:1.156px;font-weight:700;">08:24</span></div>
<div class="t" style="left:2269.5px;top:869.85px;line-height:15.7px;color:#e1e7f4;"><span style="font-size:13.65px;letter-spacing:-0.208px;">203.0.113.18</span></div>
<div class="btn bd" style="left:2417.3px;top:822.5px"><span style="font-size:15.75px;letter-spacing:0.151px;">Details</span></div>
<div class="btn br" style="left:2417.3px;top:848.9px;padding-top:8px"><span style="font-size:15.75px;letter-spacing:-0.155px;">Delete</span></div>
</div></body></html>
